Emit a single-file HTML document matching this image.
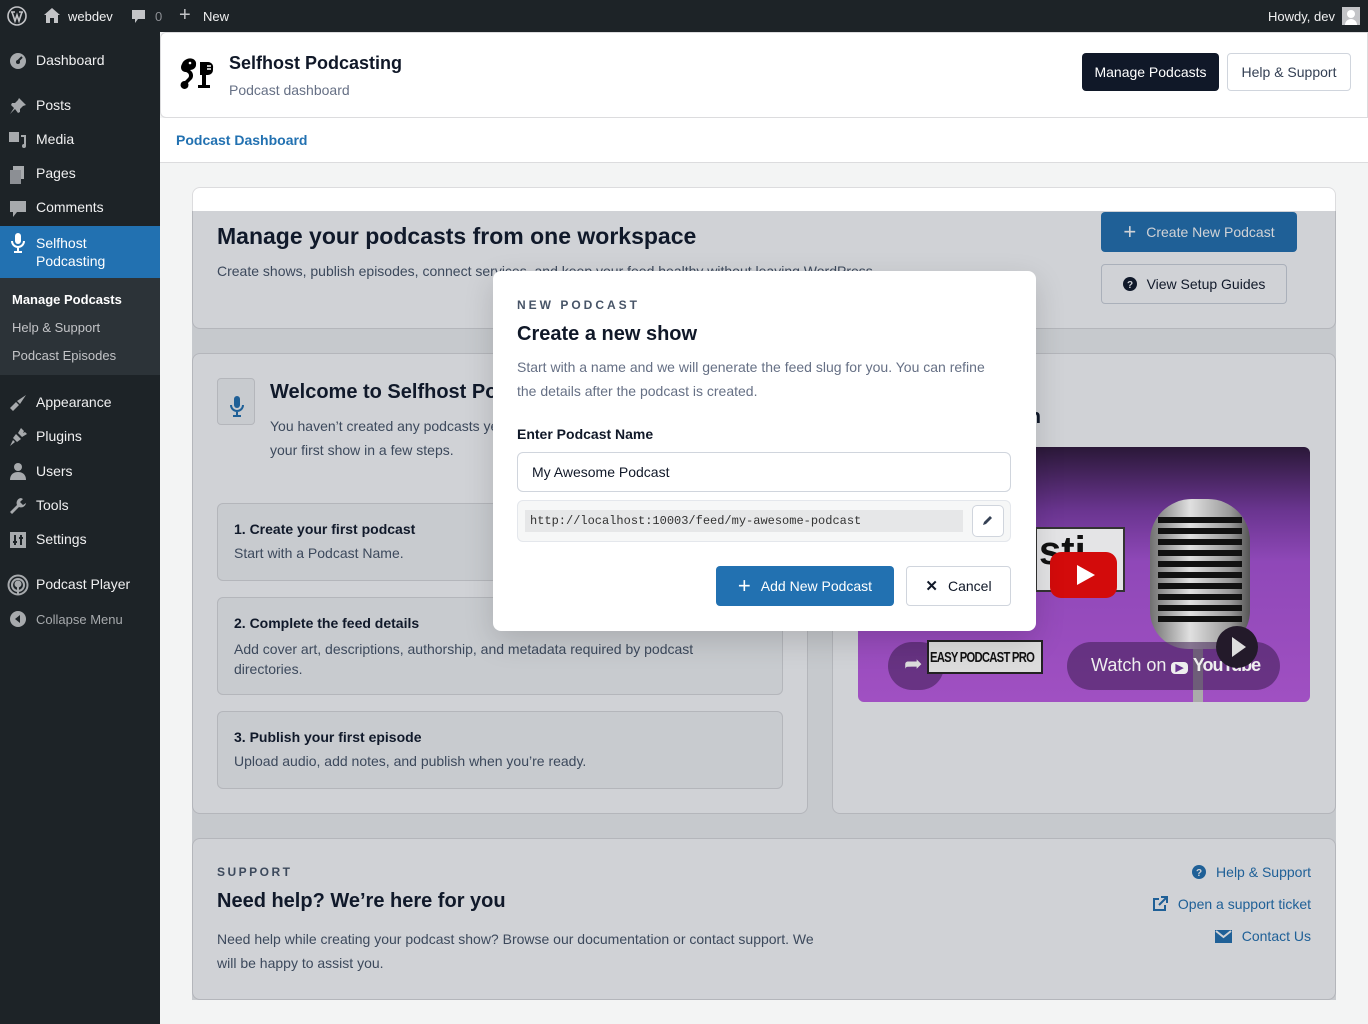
<!DOCTYPE html>
<html><head><meta charset="utf-8"><style>
*{box-sizing:border-box;margin:0;padding:0}
body{width:1368px;height:1024px;overflow:hidden;background:#f3f4f4;font-family:"Liberation Sans",sans-serif;color:#101828;position:relative}
.a{position:absolute}
#bar{left:0;top:0;width:1368px;height:32px;background:#1d2327;color:#f0f0f1;font-size:13px}
#side{left:0;top:32px;width:160px;height:992px;background:#1d2327}
.mi{position:absolute;left:36px;font-size:14px;color:#f0f0f1;white-space:nowrap}
.ic{position:absolute;left:9px;width:18px;height:18px;fill:#a7aaad}
.sub{position:absolute;left:12px;font-size:13px;color:#c3c4c7}
.t{white-space:nowrap}
.card{background:#fff;border:1px solid #dcdcde;border-radius:8px}
.step{background:#f6f7f7;border:1px solid #dcdcde;border-radius:6px}
.btn{border-radius:4px;font-size:14px;display:flex;align-items:center;justify-content:center;gap:10px;white-space:nowrap}
.lk{color:#2271b1;font-size:14px}
</style></head><body>

<div id="bar" class="a">
 <svg class="a" style="left:7px;top:6px" width="20" height="20" viewBox="0 0 20 20"><circle cx="10" cy="10" r="9" fill="none" stroke="#c3c4c7" stroke-width="1.6"/><path d="M4 6h4M12 6h4M5 6l3 9 2-6 2 6 3-9" fill="none" stroke="#c3c4c7" stroke-width="1.6"/></svg>
 <svg class="a" style="left:44px;top:8px" width="16" height="15" viewBox="0 0 16 15"><path d="M8 0L0 7h2v8h4v-5h4v5h4V7h2z" fill="#c3c4c7"/></svg>
 <span class="a t" style="left:68px;top:9px">webdev</span>
 <svg class="a" style="left:131px;top:9px" width="15" height="15" viewBox="0 0 15 15"><path d="M1 1h13v9H7l-3 4v-4H1z" fill="#c3c4c7"/></svg>
 <span class="a" style="left:155px;top:9px;color:#8c8f94">0</span>
 <span class="a" style="left:179px;top:4px;font-size:20px;color:#c3c4c7">+</span>
 <span class="a t" style="left:203px;top:9px">New</span>
 <span class="a t" style="left:1268px;top:9px">Howdy, dev</span>
 <div class="a" style="left:1342px;top:7px;width:18px;height:18px;background:#c3c4c7"><div class="a" style="left:5px;top:3px;width:8px;height:8px;border-radius:50%;background:#fff"></div><div class="a" style="left:3px;top:12px;width:12px;height:6px;border-radius:6px 6px 0 0;background:#fff"></div></div>
</div>

<div id="side" class="a">
 <svg class="ic" style="top:20px" viewBox="0 0 18 18"><circle cx="9" cy="9" r="8"/><path d="M9 9l4-4" stroke="#1d2327" stroke-width="2"/><circle cx="9" cy="10" r="2" fill="#1d2327"/></svg><span class="mi" style="top:20px">Dashboard</span>
 <svg class="ic" style="top:65px" viewBox="0 0 18 18"><path d="M10 1l7 7-3 1-3 3 0 3-2 1-3-4-5 5 4-6-3-3 1-2h3l3-3z"/></svg><span class="mi" style="top:65px">Posts</span>
 <svg class="ic" style="top:99px" viewBox="0 0 18 18"><rect x="0" y="1" width="10" height="10"/><path d="M12 4h5v11a2 2 0 1 1-2-2V6h-3z"/></svg><span class="mi" style="top:99px">Media</span>
 <svg class="ic" style="top:134px" viewBox="0 0 18 18"><rect x="4" y="0" width="11" height="13"/><rect x="1" y="4" width="11" height="14" fill="#8c8f94"/></svg><span class="mi" style="top:133px">Pages</span>
 <svg class="ic" style="top:168px" viewBox="0 0 18 18"><path d="M1 1h16v11H8l-4 5v-5H1z"/></svg><span class="mi" style="top:167px">Comments</span>
 <div class="a" style="left:0;top:194px;width:160px;height:52px;background:#2271b1"></div>
 <svg class="a" style="left:10px;top:201px" width="16" height="20" viewBox="0 0 16 20"><rect x="5" y="0" width="6" height="11" rx="3" fill="#fff"/><path d="M2 8a6 6 0 0 0 12 0M8 14v4M4 19h8" stroke="#fff" stroke-width="2" fill="none"/></svg>
 <span class="mi" style="top:202px;color:#fff;line-height:18px">Selfhost<br>Podcasting</span>
 <div class="a" style="left:152px;top:212px;width:0;height:0;border:8px solid transparent;border-right-color:#f3f4f4"></div>
 <div class="a" style="left:0;top:246px;width:160px;height:97px;background:#2c3338"></div>
 <span class="sub" style="top:260px;color:#fff;font-weight:bold">Manage Podcasts</span>
 <span class="sub" style="top:288px">Help &amp; Support</span>
 <span class="sub" style="top:316px">Podcast Episodes</span>
 <svg class="ic" style="top:362px" viewBox="0 0 18 18"><path d="M17 1l-9 6 3 3zM7 8l-6 6 3 3 6-6z"/></svg><span class="mi" style="top:362px">Appearance</span>
 <svg class="ic" style="top:396px" viewBox="0 0 18 18"><path d="M12 0l-3 5 4 4 5-3-2-2-2 1 1-2zM7 6l5 5-4 3-4-4zM4 12l2 2-5 4z"/></svg><span class="mi" style="top:396px">Plugins</span>
 <svg class="ic" style="top:430px" viewBox="0 0 18 18"><circle cx="9" cy="5" r="4"/><path d="M1 18c0-6 4-8 8-8s8 2 8 8z"/></svg><span class="mi" style="top:431px">Users</span>
 <svg class="ic" style="top:465px" viewBox="0 0 18 18"><path d="M12 1a5 5 0 0 0-4 7L1 15l2 2 7-7a5 5 0 0 0 7-4l-3 2-3-3 3-3z"/></svg><span class="mi" style="top:465px">Tools</span>
 <svg class="ic" style="top:499px" viewBox="0 0 18 18"><rect x="1" y="1" width="16" height="16"/><path d="M6 4v10M12 4v10M4 11h4M10 7h4" stroke="#1d2327" stroke-width="2"/></svg><span class="mi" style="top:499px">Settings</span>
 <svg class="a" style="left:7px;top:542px" width="22" height="22" viewBox="0 0 22 22" fill="none" stroke="#a7aaad" stroke-width="2"><circle cx="11" cy="11" r="9.5"/><circle cx="11" cy="11" r="6"/><circle cx="11" cy="10" r="2.5" fill="#a7aaad"/><path d="M11 12v9"/></svg><span class="mi" style="top:544px">Podcast Player</span>
 <svg class="ic" style="top:578px" viewBox="0 0 18 18"><circle cx="9" cy="9" r="8"/><path d="M11 5l-5 4 5 4z" fill="#1d2327"/></svg><span class="mi" style="top:580px;font-size:13px;color:#a7aaad">Collapse Menu</span>
</div>

<!-- header -->
<div class="a" style="left:160px;top:32px;width:1208px;height:86px;background:#fff;border:1px solid #dcdcde;border-radius:6px 0 0 6px"></div>
<svg class="a" style="left:179px;top:57px" width="36" height="34" viewBox="0 0 36 34"><path d="M8 2c5-2 10 1 9 6 0 3-3 5-6 5 3 2 4 6 2 9l-4 4a4 4 0 1 1-3-2l3-3c2-2 1-5-2-6-5 0-6-5-4-8 1-3 3-4 5-5z" fill="#000"/><circle cx="11" cy="6" r="1.3" fill="#fff"/><path d="M21 5h8a5 5 0 0 1 5 6v2a5 5 0 0 1-5 5h-2v10h4v3h-12v-3h4V18h-2z" fill="#000"/><path d="M28 9h4M28 12h4" stroke="#fff" stroke-width="1.5"/></svg>
<div class="a t" style="left:229px;top:53px;font-size:18px;font-weight:bold;color:#101828">Selfhost Podcasting</div>
<div class="a t" style="left:229px;top:82px;font-size:14px;color:#667085">Podcast dashboard</div>
<div class="a btn" style="left:1082px;top:53px;width:137px;height:38px;background:#101828;color:#fff">Manage Podcasts</div>
<div class="a btn" style="left:1227px;top:53px;width:124px;height:38px;background:#fff;border:1px solid #d0d5dd;color:#344054">Help &amp; Support</div>
<div class="a" style="left:160px;top:118px;width:1208px;height:45px;background:#fff;border-bottom:1px solid #dcdcde"></div>
<div class="a t" style="left:176px;top:132px;font-size:14px;font-weight:bold;color:#2271b1">Podcast Dashboard</div>

<!-- card 1 -->
<div class="a card" style="left:192px;top:187px;width:1144px;height:142px"></div>
<div class="a t" style="left:217px;top:223px;font-size:23px;font-weight:bold">Manage your podcasts from one workspace</div>
<div class="a t" style="left:217px;top:263px;font-size:14px;color:#475467">Create shows, publish episodes, connect services, and keep your feed healthy without leaving WordPress.</div>
<div class="a btn" style="left:1101px;top:212px;width:196px;height:40px;background:#2271b1;color:#fff"><span style="font-size:22px;font-weight:300">+</span>Create New Podcast</div>
<div class="a btn" style="left:1101px;top:264px;width:186px;height:40px;background:#fff;border:1px solid #d0d5dd;color:#101828"><svg width="14" height="14" viewBox="0 0 14 14"><circle cx="7" cy="7" r="7" fill="#101828"/><text x="7" y="11" font-size="10" font-weight="bold" fill="#fff" text-anchor="middle" font-family="Liberation Sans">?</text></svg>View Setup Guides</div>

<!-- card 2 left -->
<div class="a card" style="left:192px;top:353px;width:616px;height:461px"></div>
<div class="a" style="left:217px;top:378px;width:38px;height:47px;background:#f6f7f7;border:1px solid #dcdcde;border-radius:4px"></div>
<svg class="a" style="left:229px;top:396px" width="16" height="22" viewBox="0 0 16 22"><rect x="5" y="0" width="6" height="12" rx="3" fill="#2271b1"/><path d="M2 9a6 6 0 0 0 12 0M8 15v4M4 20h8" stroke="#2271b1" stroke-width="2" fill="none"/></svg>
<div class="a t" style="left:270px;top:381px;font-size:20px;font-weight:bold">Welcome to Selfhost Podcasting</div>
<div class="a t" style="left:270px;top:414px;font-size:14px;color:#475467;line-height:24px">You haven’t created any podcasts yet. Let's get started and set up<br>your first show in a few steps.</div>
<div class="a step" style="left:217px;top:503px;width:566px;height:78px"></div>
<div class="a t" style="left:234px;top:521px;font-size:14px;font-weight:bold">1. Create your first podcast</div>
<div class="a t" style="left:234px;top:545px;font-size:14px;color:#475467">Start with a Podcast Name.</div>
<div class="a step" style="left:217px;top:597px;width:566px;height:98px"></div>
<div class="a t" style="left:234px;top:615px;font-size:14px;font-weight:bold">2. Complete the feed details</div>
<div class="a" style="left:234px;top:639px;width:500px;font-size:14px;color:#475467;line-height:20px">Add cover art, descriptions, authorship, and metadata required by podcast directories.</div>
<div class="a step" style="left:217px;top:711px;width:566px;height:78px"></div>
<div class="a t" style="left:234px;top:729px;font-size:14px;font-weight:bold">3. Publish your first episode</div>
<div class="a t" style="left:234px;top:753px;font-size:14px;color:#475467">Upload audio, add notes, and publish when you’re ready.</div>

<!-- card 2 right -->
<div class="a card" style="left:832px;top:353px;width:504px;height:461px"></div>
<div class="a t" style="right:327px;top:406px;font-size:20px;font-weight:bold">Learn the basics in</div>

<!-- support -->
<div class="a card" style="left:192px;top:838px;width:1144px;height:162px"></div>
<div class="a t" style="left:217px;top:865px;font-size:12px;font-weight:bold;letter-spacing:2.5px;color:#475467">SUPPORT</div>
<div class="a t" style="left:217px;top:890px;font-size:20px;font-weight:bold">Need help? We’re here for you</div>
<div class="a" style="left:217px;top:927px;width:608px;font-size:14px;color:#475467;line-height:24px">Need help while creating your podcast show? Browse our documentation or contact support. We will be happy to assist you.</div>
<div class="a t lk" style="right:57px;top:864px;display:flex;gap:10px;align-items:center"><svg width="14" height="14" viewBox="0 0 14 14"><circle cx="7" cy="7" r="7" fill="#2271b1"/><text x="7" y="11" font-size="10" font-weight="bold" fill="#fff" text-anchor="middle" font-family="Liberation Sans">?</text></svg>Help &amp; Support</div>
<div class="a t lk" style="right:57px;top:896px;display:flex;gap:10px;align-items:center"><svg width="16" height="16" viewBox="0 0 16 16" fill="none" stroke="#2271b1" stroke-width="2"><path d="M7 3H2v11h11V9M9 1h6v6M15 1L7 9"/></svg>Open a support ticket</div>
<div class="a t lk" style="right:57px;top:928px;display:flex;gap:10px;align-items:center"><svg width="17" height="13" viewBox="0 0 17 13"><rect width="17" height="13" fill="#2271b1"/><path d="M1 1l7.5 6L16 1" stroke="#fff" stroke-width="2" fill="none"/></svg>Contact Us</div>

<!-- overlay -->
<div class="a" style="left:192px;top:211px;width:1144px;height:789px;background:rgba(20,30,50,0.2)"></div>

<!-- video thumbnail -->
<div class="a" style="left:858px;top:447px;width:452px;height:255px;border-radius:6px;overflow:hidden;background:linear-gradient(#2a1838 0%,#6a3590 25%,#8f48b8 45%,#a050c2 100%)">
 <div class="a" style="left:177px;top:80px;width:90px;height:65px;background:#e4e4e6;border:2px solid #333;overflow:hidden"><div class="a t" style="left:2px;top:0px;font-size:40px;font-weight:bold;color:#111">sti</div></div>
 <div class="a" style="left:192px;top:105px;width:67px;height:46px;background:#d30b0b;border-radius:11px"></div>
 <div class="a" style="left:219px;top:118px;width:0;height:0;border-left:18px solid #fff;border-top:10px solid transparent;border-bottom:10px solid transparent"></div>
 <div class="a" style="left:335px;top:200px;width:10px;height:60px;background:#aaa"></div>
 <div class="a" style="left:292px;top:52px;width:100px;height:150px;border-radius:42px 42px 38px 38px;background:linear-gradient(90deg,#707070,#e0e0e0 40%,#9a9a9a 80%,#555)"></div>
 <div class="a" style="left:300px;top:70px;width:84px;height:110px;background:repeating-linear-gradient(#111 0 6px,transparent 6px 11px)"></div>
 <div class="a" style="left:30px;top:195px;width:56px;height:48px;border-radius:24px;background:rgba(60,30,80,.55)"></div>
 <div class="a t" style="left:46px;top:204px;font-size:22px;color:#ddd">➦</div>
 <div class="a" style="left:69px;top:193px;width:116px;height:34px;background:#dcdcdc;border:2px solid #222;overflow:hidden"><div class="a t" style="left:1px;top:7px;font-size:15px;font-weight:bold;color:#111;letter-spacing:-1px;transform:scaleX(.75);transform-origin:left">EASY PODCAST PRO</div></div>
 <div class="a" style="left:209px;top:195px;width:213px;height:48px;border-radius:24px;background:rgba(60,30,80,.55)"></div>
 <div class="a t" style="left:233px;top:208px;font-size:18px;color:#eee">Watch on <span style="background:#eee;color:#6a3590;border-radius:4px;padding:0 4px;font-size:11px">▶</span> <b style="letter-spacing:-1px">YouTube</b></div>
 <div class="a" style="left:358px;top:179px;width:42px;height:42px;border-radius:50%;background:#231a2a"></div>
 <div class="a" style="left:374px;top:190px;width:0;height:0;border-left:14px solid #ddd;border-top:10px solid transparent;border-bottom:10px solid transparent"></div>
</div>

<!-- modal -->
<div class="a" style="left:493px;top:271px;width:543px;height:360px;background:#fff;border-radius:8px;box-shadow:0 10px 30px rgba(0,0,0,.15)"></div>
<div class="a t" style="left:517px;top:298px;font-size:12px;font-weight:bold;letter-spacing:3px;color:#475467">NEW PODCAST</div>
<div class="a t" style="left:517px;top:323px;font-size:20px;font-weight:bold">Create a new show</div>
<div class="a" style="left:517px;top:355px;width:490px;font-size:14px;color:#667085;line-height:24px">Start with a name and we will generate the feed slug for you. You can refine the details after the podcast is created.</div>
<div class="a t" style="left:517px;top:426px;font-size:14px;font-weight:bold">Enter Podcast Name</div>
<div class="a" style="left:517px;top:452px;width:494px;height:40px;border:1px solid #d0d5dd;border-radius:6px;font-size:14px;padding:11px 14px">My Awesome Podcast</div>
<div class="a" style="left:517px;top:500px;width:494px;height:42px;border:1px solid #e4e7ec;background:#f6f7f7;border-radius:6px"></div>
<div class="a t" style="left:525px;top:510px;width:438px;height:22px;background:#e6e7e8;font-family:'Liberation Mono',monospace;font-size:12px;color:#333;padding:4px 5px">http://localhost:10003/feed/my-awesome-podcast</div>
<div class="a" style="left:972px;top:505px;width:32px;height:32px;background:#fff;border:1px solid #d0d5dd;border-radius:5px"></div>
<svg class="a" style="left:982px;top:514px" width="12" height="12" viewBox="0 0 12 12"><path d="M1 11l1-3 6-6 2 2-6 6z" fill="#344054"/></svg>
<div class="a btn" style="left:716px;top:566px;width:178px;height:40px;background:#2271b1;color:#fff"><span style="font-size:22px;font-weight:300">+</span>Add New Podcast</div>
<div class="a btn" style="left:906px;top:566px;width:105px;height:40px;background:#fff;border:1px solid #d0d5dd;color:#101828"><span style="font-size:15px;font-weight:bold">✕</span>Cancel</div>
</body></html>
